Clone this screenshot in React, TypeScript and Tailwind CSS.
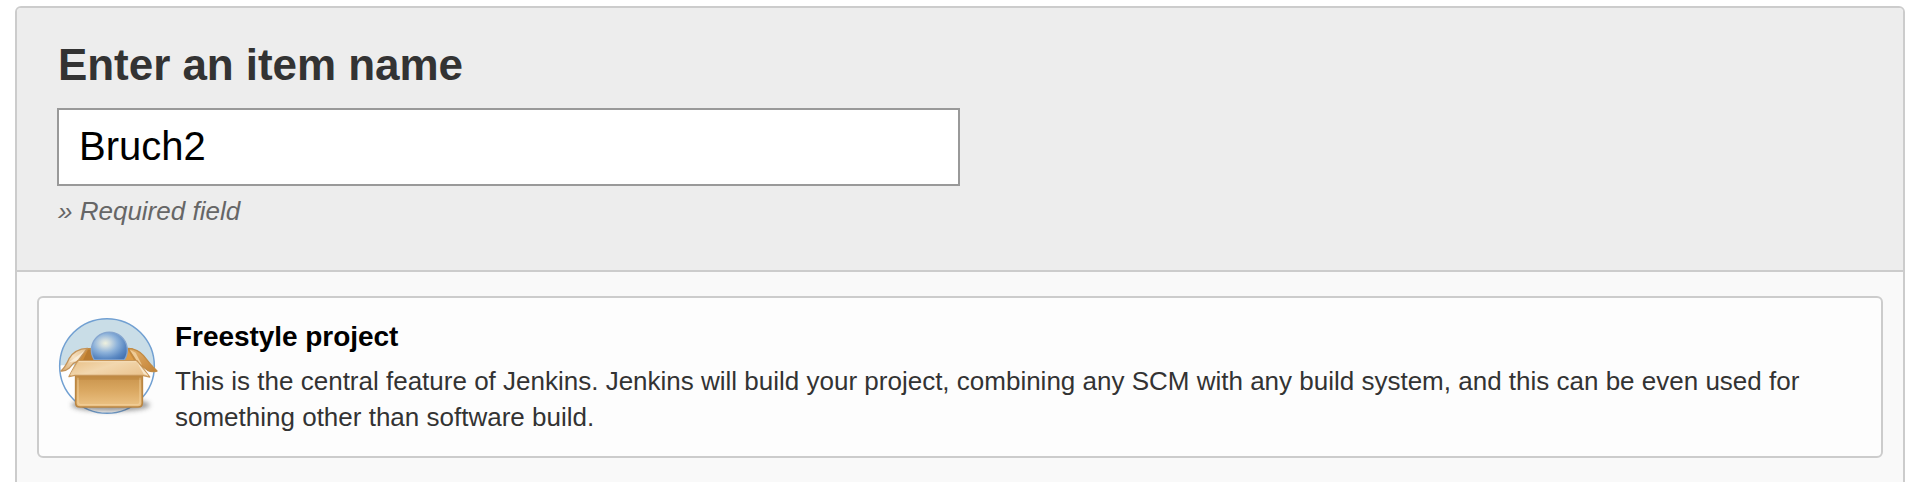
function FreestyleIcon() {
  return (
    <svg viewBox="24 18 300 294" className="h-[98px] w-[100px] shrink-0 overflow-visible" aria-hidden="true">
      <defs>
        <radialGradient id="ball" cx="0.39" cy="0.4" r="0.7">
          <stop offset="0" stopColor="#eff1de" />
          <stop offset="0.18" stopColor="#cfdce0" />
          <stop offset="0.48" stopColor="#8db2da" />
          <stop offset="0.8" stopColor="#5a88c2" />
          <stop offset="1" stopColor="#4675b3" />
        </radialGradient>
        <linearGradient id="front" x1="0" y1="0" x2="0" y2="1">
          <stop offset="0" stopColor="#c8924a" />
          <stop offset="0.5" stopColor="#dba963" />
          <stop offset="1" stopColor="#edc486" />
        </linearGradient>
        <linearGradient id="flap" x1="0" y1="0" x2="1" y2="0.6">
          <stop offset="0" stopColor="#e8bf85" />
          <stop offset="0.5" stopColor="#f2d7ae" />
          <stop offset="1" stopColor="#ebc591" />
        </linearGradient>
        <linearGradient id="left" x1="0" y1="1" x2="1" y2="0">
          <stop offset="0" stopColor="#d9ab6e" />
          <stop offset="0.55" stopColor="#f5e0c2" />
          <stop offset="1" stopColor="#e3bd86" />
        </linearGradient>
        <linearGradient id="right" x1="0" y1="0" x2="1" y2="1">
          <stop offset="0" stopColor="#e2b36f" />
          <stop offset="0.6" stopColor="#d0944a" />
          <stop offset="1" stopColor="#c08136" />
        </linearGradient>
        <filter id="soft" x="-20%" y="-80%" width="140%" height="260%">
          <feGaussianBlur stdDeviation="8" />
        </filter>
        <clipPath id="upper">
          <rect x="20" y="0" width="310" height="168" />
        </clipPath>
      </defs>
      <circle cx="171" cy="168" r="142" fill="#fefefe" />
      <circle cx="171" cy="168" r="142" fill="#c9dde7" clipPath="url(#upper)" />
      <path d="M31 166H90V205H33Z" fill="#fefefe" />
      <circle cx="171" cy="168" r="142" fill="none" stroke="#71a0d2" strokeWidth="4.5" />
      <ellipse cx="182" cy="285" rx="118" ry="19" fill="#444" opacity="0.55" filter="url(#soft)" />
      <path d="M110 116H246L258 158H82Z" fill="#cd8c3a" stroke="#c08c48" strokeWidth="4" />
      <path d="M114 119 98 153H130L138 119Z" fill="#b97b30" />
      <path d="M233 119 255 156H210L226 119Z" fill="#dc9d49" />
      <path d="M112 115C87 116 68 127 57 146Q46 171 33 183Q47 184 57 175L70 160 83 154Z" fill="url(#left)" stroke="#c3935a" strokeWidth="4" strokeLinejoin="round" />
      <path d="m57 157 47-35-25 31Z" fill="#faefdc" opacity="0.8" />
      <path d="M236 115Q264 118 280 136Q301 164 321 183Q305 188 293 181L260 157Z" fill="url(#right)" stroke="#c18b45" strokeWidth="4" strokeLinejoin="round" />
      <path d="m239 119 25 38 12 8-19-37Z" fill="#efcc97" />
      <path d="M133 150A54 54 0 1 1 223 150Z" fill="url(#ball)" stroke="#86a6cf" strokeWidth="4" />
      <path d="M77 196H277V278Q277 291 264 291H90Q77 291 77 278Z" fill="url(#front)" stroke="#ba8643" strokeWidth="5" />
      <path d="M84 203V276Q84 284 92 284H262Q270 284 270 276V203" fill="none" stroke="#f3d2a0" strokeWidth="4" opacity="0.65" />
      <path d="M82 199H273V209H82Z" fill="#a96e28" opacity="0.25" />
      <path d="M83 152H261L299 201 277 196H75L57 200Z" fill="url(#flap)" stroke="#c8975a" strokeWidth="4" strokeLinejoin="round" />
      <path d="M86 155H258" stroke="#f4dbb5" strokeWidth="4" />
      <path d="m261 156 20 36 15 6Z" fill="#f8e6ca" />
      <path d="m82 156-18 36-5 5Z" fill="#f8e6ca" />
    </svg>
  );
}

export default function App() {
  return (
    <main className="h-[482px] overflow-hidden bg-white pt-1.5 pr-[7px] pl-[15px] font-['Liberation_Sans',Arial,sans-serif]">
      <div className="h-[520px] rounded-t-md border-2 border-[#ccc] bg-[#f9f9f9]">
        <header className="h-[264px] rounded-t border-b-2 border-[#ccc] bg-[#ededed] px-10 pt-8">
          <label htmlFor="name" className="block h-[68px] pl-px text-[44px] leading-[50px] font-bold tracking-[-0.05px] text-[#333]">
            Enter an item name
          </label>
          <input
            id="name"
            defaultValue="Bruch2"
            className="block h-[78px] w-[903px] border-2 border-[#999] bg-white px-5 pb-0.5 text-[40px] text-black outline-none"
          />
          <p className="mt-2.5 pl-px text-[26px] leading-[30px] text-[#666] italic">» Required field</p>
        </header>
        <section className="px-5 pt-6">
          <article className="flex h-[162px] rounded-md border-2 border-[#ccc] bg-[#fdfdfd] pt-[18px] pl-[19px]">
            <FreestyleIcon />
            <div className="ml-[17px] w-[1640px]">
              <h2 className="mt-[5px] text-[28px] leading-8 font-bold tracking-[-0.05px] text-black">Freestyle project</h2>
              <p className="mt-[10px] text-[26px] leading-9 text-[#333]">
                This is the central feature of Jenkins. Jenkins will build your project, combining any SCM with any build
                system, and this can be even used for something other than software build.
              </p>
            </div>
          </article>
        </section>
      </div>
    </main>
  );
}
